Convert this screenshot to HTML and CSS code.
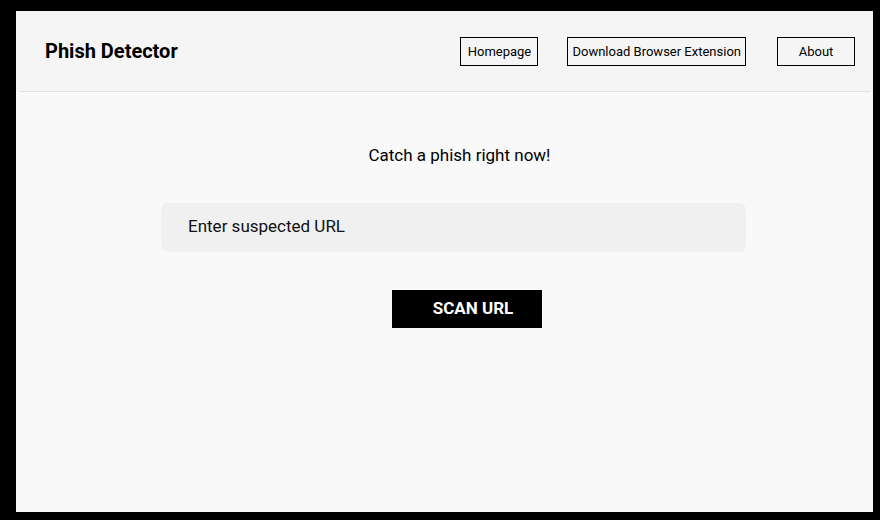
FILE: index.html
```html
<!DOCTYPE html>
<html lang="en">
<head>
<meta charset="utf-8">
<title>Phish Detector</title>
<link rel="stylesheet" href="styles.css">
</head>
<body>
<div class="page">
  <header class="header">
    <h1 class="brand">Phish Detector</h1>
    <nav class="nav">
      <a class="nav-btn" href="#">Homepage</a>
      <a class="nav-btn nav-btn-wide" href="#">Download Browser Extension</a>
      <a class="nav-btn nav-btn-last" href="#">About</a>
    </nav>
  </header>
  <div class="divider"></div>
  <main class="main">
    <p class="tagline">Catch a phish right now!</p>
    <input class="url-input" type="text" placeholder="Enter suspected URL">
    <button class="scan-btn" type="button">SCAN URL</button>
  </main>
</div>
</body>
</html>
```

FILE: styles.css
```css
html, body {
  margin: 0;
  height: 100%;
}
body {
  background: #000;
  padding: 11px 7px 8px 16px;
  box-sizing: border-box;
  font-family: Roboto, "Liberation Sans", sans-serif;
  color: #000;
}
.page {
  height: 100%;
  background: #f9f9f9;
  display: flex;
  flex-direction: column;
}
.header {
  height: 80px;
  background: #f5f5f5;
  display: flex;
  align-items: center;
  justify-content: space-between;
  padding: 0 18px 0 29px;
}
.brand {
  margin: 0 0 1px;
  font-size: 20px;
  font-weight: 700;
}
.nav {
  display: flex;
}
.nav-btn {
  display: flex;
  align-items: center;
  justify-content: center;
  box-sizing: border-box;
  height: 29px;
  min-width: 78px;
  padding: 0 4px;
  border: 1px solid #000;
  color: #000;
  text-decoration: none;
  font-size: 13px;
}
.nav-btn-wide {
  margin-left: 29px;
}
.nav-btn-last {
  margin-left: 31px;
}
.divider {
  height: 1px;
  background: #e2e2e2;
  margin: 0 3px;
}
.main {
  flex: 1;
  background: #f9f9f9;
  display: flex;
  flex-direction: column;
  align-items: center;
}
.tagline {
  margin: 53px 0 0 30px;
  font-size: 17px;
  line-height: 20px;
}
.url-input {
  margin: 38px 0 0 18px;
  width: 585px;
  height: 49px;
  box-sizing: border-box;
  border: none;
  border-radius: 7px;
  background: #f0f0f0;
  padding: 0 0 3px 27px;
  font-family: Roboto, "Liberation Sans", sans-serif;
  font-size: 17px;
  outline: none;
}
.url-input::placeholder {
  color: #111;
  opacity: 1;
}
.scan-btn {
  margin: 38px 0 0 45px;
  width: 150px;
  height: 38px;
  border: none;
  background: #000;
  color: #fff;
  font-family: Roboto, "Liberation Sans", sans-serif;
  font-size: 17px;
  font-weight: 700;
  padding: 0 0 3px 12px;
}
```
